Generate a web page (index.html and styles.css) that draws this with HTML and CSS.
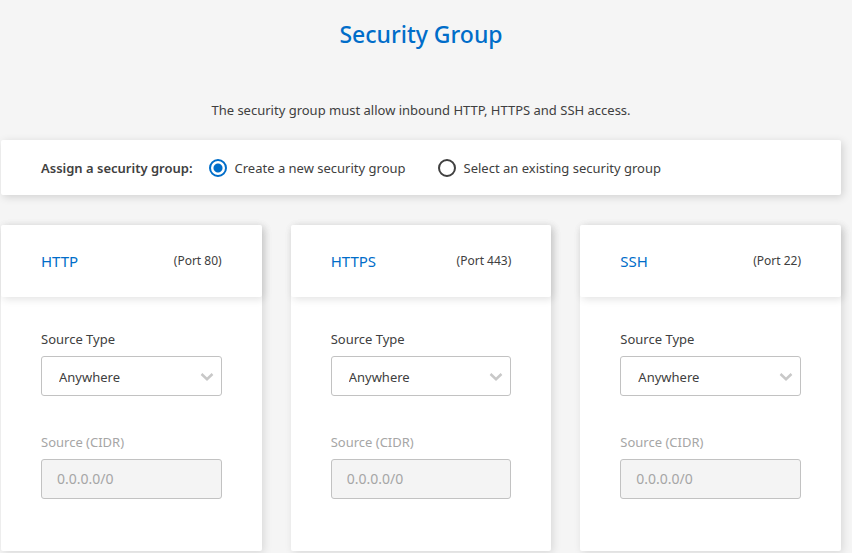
FILE: index.html
```html
<!DOCTYPE html>
<html lang="en">
<head>
<meta charset="utf-8">
<meta name="viewport" content="width=device-width, initial-scale=1">
<title>Security Group</title>
<link rel="stylesheet" href="styles.css">
</head>
<body>
<main class="page">
  <h1 class="title">Security Group</h1>
  <p class="intro">The security group must allow inbound HTTP, HTTPS and SSH access.</p>

  <div class="assign" role="radiogroup" aria-labelledby="assign-label">
    <span class="assign-label" id="assign-label">Assign a security group:</span>
    <label class="choice"><input class="radio" type="radio" name="group" checked><span>Create a new security group</span></label>
    <label class="choice"><input class="radio" type="radio" name="group"><span>Select an existing security group</span></label>
  </div>

  <div class="cards">
    <section class="card">
      <header class="card-head">
        <h2 class="protocol">HTTP</h2>
        <span class="port">(Port 80)</span>
      </header>
      <div class="card-body">
        <div class="field">
          <label class="label" for="http-type">Source Type</label>
          <div class="select-wrap">
            <select class="control select" id="http-type"><option>Anywhere</option></select>
            <svg class="chevron" viewBox="0 0 14 8" aria-hidden="true"><path d="M1.500 1 7 6.200 12.500 1"/></svg>
          </div>
        </div>
        <div class="field">
          <label class="label label-disabled" for="http-cidr">Source (CIDR)</label>
          <input class="control input" id="http-cidr" type="text" value="0.0.0.0/0" disabled>
        </div>
      </div>
    </section>

    <section class="card">
      <header class="card-head">
        <h2 class="protocol">HTTPS</h2>
        <span class="port">(Port 443)</span>
      </header>
      <div class="card-body">
        <div class="field">
          <label class="label" for="https-type">Source Type</label>
          <div class="select-wrap">
            <select class="control select" id="https-type"><option>Anywhere</option></select>
            <svg class="chevron" viewBox="0 0 14 8" aria-hidden="true"><path d="M1.500 1 7 6.200 12.500 1"/></svg>
          </div>
        </div>
        <div class="field">
          <label class="label label-disabled" for="https-cidr">Source (CIDR)</label>
          <input class="control input" id="https-cidr" type="text" value="0.0.0.0/0" disabled>
        </div>
      </div>
    </section>

    <section class="card">
      <header class="card-head">
        <h2 class="protocol">SSH</h2>
        <span class="port">(Port 22)</span>
      </header>
      <div class="card-body">
        <div class="field">
          <label class="label" for="ssh-type">Source Type</label>
          <div class="select-wrap">
            <select class="control select" id="ssh-type"><option>Anywhere</option></select>
            <svg class="chevron" viewBox="0 0 14 8" aria-hidden="true"><path d="M1.500 1 7 6.200 12.500 1"/></svg>
          </div>
        </div>
        <div class="field">
          <label class="label label-disabled" for="ssh-cidr">Source (CIDR)</label>
          <input class="control input" id="ssh-cidr" type="text" value="0.0.0.0/0" disabled>
        </div>
      </div>
    </section>
  </div>
</main>
</body>
</html>
```

FILE: styles.css
```css
* {
  box-sizing: border-box;
}

body {
  margin: 0;
  background: #f5f5f5;
  color: #404040;
  font-family: "Noto Sans", "Open Sans", sans-serif;
  font-size: 13px;
  line-height: 20px;
}

.page {
  padding: 18px 11px 2px 1px;
}

.title {
  margin: 0 0 50px;
  color: #006dc9;
  font-size: 23px;
  font-weight: 500;
  line-height: 32px;
  text-align: center;
}

.intro {
  margin: 0 0 20px;
  text-align: center;
}

.assign {
  display: flex;
  flex-wrap: wrap;
  align-items: center;
  min-height: 55px;
  margin-bottom: 30px;
  padding: 16px 40px;
  border-radius: 2px;
  background: #fff;
  box-shadow: 2px 2px 8px rgba(0, 0, 0, 0.15);
}

.assign-label {
  margin-right: 16px;
  font-weight: 600;
}

.choice {
  display: flex;
  align-items: center;
  gap: 8px;
  margin-right: 32px;
}

.radio {
  appearance: none;
  width: 18px;
  height: 18px;
  margin: 0;
  border: 2px solid #404040;
  border-radius: 50%;
  background: #fff;
}

.radio:checked {
  border-color: #006dc9;
  background: radial-gradient(circle, #006dc9 4px, #fff 5px);
}

.cards {
  display: grid;
  grid-template-columns: repeat(3, 1fr);
  gap: 29px;
}

.card {
  border-radius: 2px;
  background: #fff;
  box-shadow: 2px 2px 8px rgba(0, 0, 0, 0.12);
}

.card-head {
  display: flex;
  align-items: center;
  justify-content: space-between;
  min-height: 72px;
  padding: 0 40px;
  border-radius: 2px;
  box-shadow: 2px 2px 8px rgba(0, 0, 0, 0.12);
}

.protocol {
  margin: 0;
  color: #006dc9;
  font-size: 15px;
  font-weight: 400;
}

.port {
  font-size: 12px;
}

.card-body {
  display: grid;
  gap: 36px;
  padding: 32px 40px 52px;
}

.field {
  display: grid;
  gap: 7px;
}

.label-disabled {
  color: #a6a6a6;
}

.select-wrap {
  position: relative;
}

.control {
  display: block;
  width: 100%;
  height: 40px;
  border: 1px solid #c2c2c2;
  border-radius: 3px;
  font: inherit;
}

.select {
  appearance: none;
  padding: 2px 32px 0 17px;
  background: #fff;
  color: #404040;
}

.chevron {
  position: absolute;
  top: 17px;
  right: 8px;
  width: 14px;
  height: 8px;
  fill: none;
  stroke: #c8c8c8;
  stroke-width: 2.5;
  pointer-events: none;
}

.input {
  padding: 0 15px 2px;
  background: #f4f4f4;
  color: #a6a6a6;
  font-size: 14px;
}
```
